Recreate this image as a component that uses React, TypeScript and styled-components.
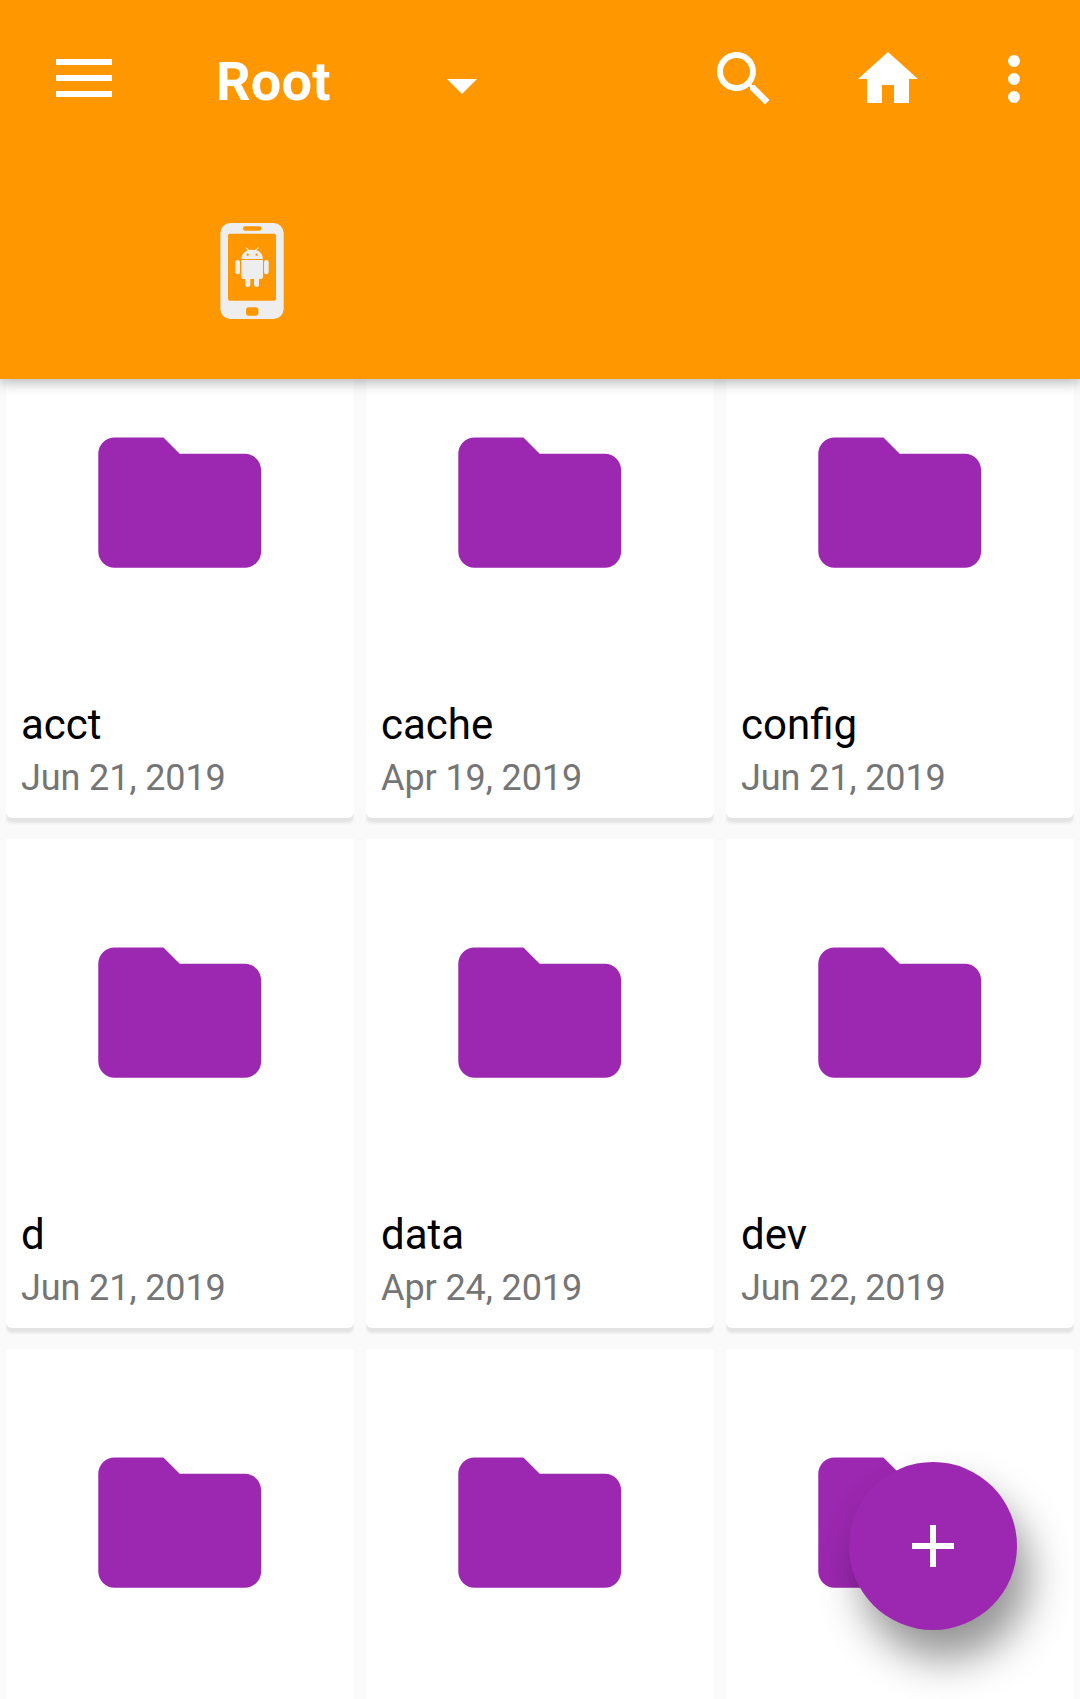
import React from "react";
import styled, { createGlobalStyle } from "styled-components";

const ACCENT = "#9c27b0";
const PRIMARY = "#ff9800";

const GlobalStyle = createGlobalStyle`
  *, *::before, *::after { box-sizing: border-box; }
  html, body { margin: 0; padding: 0; }
  body { font-family: Roboto, "Noto Sans", sans-serif; background: #fafafa; }
  button { border: 0; padding: 0; background: none; color: inherit; font: inherit; }
`;

const Screen = styled.div`
  position: relative;
  display: flex;
  flex-direction: column;
  width: 1080px;
  height: 1699px;
  overflow: hidden;
  background: #fafafa;
`;

const Header = styled.header`
  position: relative;
  z-index: 1;
  flex: none;
  height: 379px;
  color: #fff;
  background: ${PRIMARY};
  box-shadow: 0 4px 12px rgba(0, 0, 0, 0.28);
`;

const Toolbar = styled.div`
  display: flex;
  align-items: center;
  height: 158px;
  padding: 0 30px 0 48px;
`;

const IconButton = styled.button<{ $gap?: number }>`
  display: flex;
  width: 72px;
  height: 72px;
  margin-left: ${(p) => p.$gap ?? 0}px;

  svg {
    display: block;
    width: 72px;
    height: 72px;
    fill: currentColor;
  }
`;

const Picker = styled.button`
  display: flex;
  align-items: center;
  justify-content: space-between;
  width: 282px;
  height: 72px;
  margin-left: 96px;
`;

const Title = styled.span`
  padding-top: 5px;
  font-size: 54px;
  font-weight: 700;
  line-height: 64px;
  letter-spacing: 0.2px;
`;

const Caret = styled.svg`
  width: 72px;
  height: 72px;
  fill: currentColor;
`;

const Actions = styled.div`
  display: flex;
  margin-left: auto;
`;

const PathBar = styled.div`
  padding: 52px 0 0 200px;
`;

const PhoneIcon = styled.svg`
  display: block;
  width: 100px;
  height: 120px;
  fill: #eee;
`;

const Content = styled.main`
  flex: 1;
  overflow: hidden;
`;

const Grid = styled.div`
  display: grid;
  grid-template-columns: repeat(3, 348px);
  column-gap: 12px;
  margin-top: -50px;
  padding: 0 6px;
`;

const Cell = styled.div`
  height: 510px;
  overflow: hidden;
`;

const Card = styled.article`
  display: flex;
  flex-direction: column;
  height: 489px;
  padding: 76px 15px 19px;
  border-radius: 0 0 6px 6px;
  background: #fff;
  box-shadow: 0 5px 3px rgba(0, 0, 0, 0.09);
`;

const FolderIcon = styled.svg`
  display: block;
  width: 195.4px;
  height: 195.4px;
  margin: -0.3px 0 auto 60.6px;
  fill: ${ACCENT};
`;

const Name = styled.div`
  color: #000;
  font-size: 42px;
  line-height: 49px;
`;

const Modified = styled.div`
  margin-top: 8px;
  color: #757575;
  font-size: 36px;
  line-height: 42px;
  letter-spacing: -0.1px;
`;

const Fab = styled.button`
  position: absolute;
  right: 63px;
  bottom: 69px;
  z-index: 2;
  display: flex;
  align-items: center;
  justify-content: center;
  width: 168px;
  height: 168px;
  border-radius: 50%;
  background: ${ACCENT};
  box-shadow: 12px 29px 42px rgba(0, 0, 0, 0.42);

  svg {
    width: 72px;
    height: 72px;
    fill: #fff;
  }
`;

type Folder = { id: number; name?: string; date?: string };

const folders: Folder[] = [
  { id: 1, name: "acct", date: "Jun 21, 2019" },
  { id: 2, name: "cache", date: "Apr 19, 2019" },
  { id: 3, name: "config", date: "Jun 21, 2019" },
  { id: 4, name: "d", date: "Jun 21, 2019" },
  { id: 5, name: "data", date: "Apr 24, 2019" },
  { id: 6, name: "dev", date: "Jun 22, 2019" },
  { id: 7 },
  { id: 8 },
  { id: 9 },
];

function FolderCard({ name, date }: Folder) {
  return (
    <Cell>
      <Card>
        <FolderIcon viewBox="0 0 24 24">
          <path d="M10 4H4c-1.1 0-2 .9-2 2v12c0 1.1.9 2 2 2h16c1.1 0 2-.9 2-2V8c0-1.1-.9-2-2-2h-8l-2-2z" />
        </FolderIcon>
        {name && <Name>{name}</Name>}
        {date && <Modified>{date}</Modified>}
      </Card>
    </Cell>
  );
}

function Phone() {
  return (
    <PhoneIcon viewBox="0 0 300 360">
      <path
        fillRule="evenodd"
        d="M91 39H221A30 30 0 0 1 251 69V297A30 30 0 0 1 221 327H91A30 30 0 0 1 61 297V69A30 30 0 0 1 91 39ZM135 49Q129 49 129 55.500Q129 62 135 62H178Q184 62 184 55.500Q184 49 178 49ZM89 71Q84 71 84 76V267Q84 272 89 272H223Q228 272 228 267V76Q228 71 223 71ZM146 292Q138 292 138 300V309Q138 317 146 317H167Q175 317 175 309V300Q175 292 167 292Z"
      />
      <path
        fillRule="evenodd"
        d="M124 147C125 132 134 124 144 121L136 113L138 112L148 120Q157 118 165 120L175 112L177 113L169 121C180 124 188 132 189 147ZM143 130.500a3.500 3.500 0 1 0 0 7a3.500 3.500 0 1 0 0-7ZM170 130.500a3.500 3.500 0 1 0 0 7a3.500 3.500 0 1 0 0-7Z"
      />
      <path d="M124 150H189V200Q189 207 182 207H177V224Q177 231 170 231Q162 231 162 224V207H151V224Q151 231 144 231Q136 231 136 224V207H131Q124 207 124 200Z" />
      <rect x="106" y="150" width="14" height="43" rx="7" />
      <rect x="192" y="150" width="14" height="43" rx="7" />
    </PhoneIcon>
  );
}

export default function App() {
  return (
    <>
      <GlobalStyle />
      <Screen>
        <Header>
          <Toolbar>
            <IconButton aria-label="Menu">
              <svg viewBox="0 0 72 72">
                <path d="M8 16h56v6H8zM8 32h56v6H8zM8 48h56v6H8z" />
              </svg>
            </IconButton>
            <Picker>
              <Title>Root</Title>
              <Caret viewBox="0 0 72 72">
                <path d="M21 36h30L36 51z" />
              </Caret>
            </Picker>
            <Actions>
              <IconButton aria-label="Search">
                <svg viewBox="0 0 24 24">
                  <path d="M15.500 14h-.79l-.28-.27C15.410 12.590 16 11.110 16 9.500 16 5.910 13.090 3 9.500 3S3 5.910 3 9.500 5.910 16 9.500 16c1.610 0 3.090-.59 4.230-1.570l.27.28v.79l5 4.990L20.490 19l-4.990-5zm-6 0C7.010 14 5 11.990 5 9.500S7.010 5 9.500 5 14 7.010 14 9.500 11.990 14 9.500 14z" />
                </svg>
              </IconButton>
              <IconButton aria-label="Home" $gap={72}>
                <svg viewBox="0 0 24 24">
                  <path d="M10 20v-6h4v6h5v-8h3L12 3 2 12h3v8z" />
                </svg>
              </IconButton>
              <IconButton aria-label="More options" $gap={54}>
                <svg viewBox="0 0 24 24">
                  <circle cx="12" cy="6" r="2" />
                  <circle cx="12" cy="12" r="2" />
                  <circle cx="12" cy="18" r="2" />
                </svg>
              </IconButton>
            </Actions>
          </Toolbar>
          <PathBar>
            <Phone />
          </PathBar>
        </Header>
        <Content>
          <Grid>
            {folders.map((f) => (
              <FolderCard key={f.id} {...f} />
            ))}
          </Grid>
        </Content>
        <Fab aria-label="Add">
          <svg viewBox="0 0 24 24">
            <path d="M19 13h-6v6h-2v-6H5v-2h6V5h2v6h6v2z" />
          </svg>
        </Fab>
      </Screen>
    </>
  );
}
